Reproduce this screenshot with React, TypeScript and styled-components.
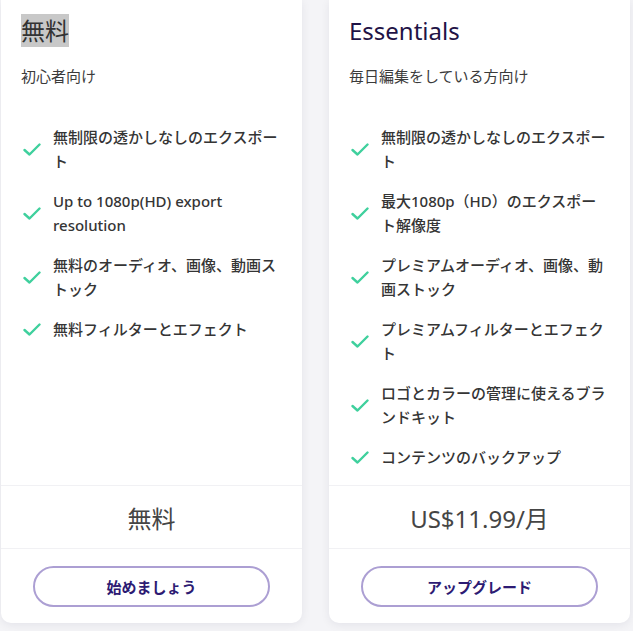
import React from "react";
import styled, { createGlobalStyle } from "styled-components";

const Global = createGlobalStyle`
  html, body { margin: 0; padding: 0; background: #f4f4f7; }
  body { font-family: "Noto Sans", "Noto Sans CJK JP", sans-serif; color: #3b3b3b; }
  * { box-sizing: border-box; }
`;

const Grid = styled.div`
  display: grid;
  grid-template-columns: 301px 301px;
  column-gap: 27px;
  padding-left: 1px;
  width: 633px;
  height: 631px;
  align-items: stretch;
  padding-bottom: 8px;
`;

const Card = styled.div`
  display: flex;
  flex-direction: column;
  background: #ffffff;
  border-radius: 0 0 10px 10px;
  box-shadow: 0 2px 10px rgba(20, 20, 60, 0.07);
`;

const Header = styled.div`
  padding: 13px 20px 0;
`;

const Title = styled.h2<{ $brand?: boolean }>`
  margin: 0;
  font-size: 24px;
  line-height: 35px;
  font-weight: 400;
  color: ${(p) => (p.$brand ? "#1f1346" : "#333333")};
`;

const Selected = styled.span`
  background: #c8c8c8;
`;

const Subtitle = styled.p`
  margin: 18px 0 0;
  font-size: 15px;
  line-height: 20px;
  color: #3b3b3b;
`;

const Features = styled.ul`
  list-style: none;
  margin: 39px 0 0;
  padding: 0 20px 16px;
  flex: 1;
  display: flex;
  flex-direction: column;
  gap: 16px;
`;

const Item = styled.li`
  display: flex;
  align-items: center;
  gap: 12px;
`;

const Check = styled.svg`
  flex: none;
  width: 18px;
  height: 13px;
  margin-left: 2px;
`;

const ItemText = styled.span`
  font-size: 15px;
  line-height: 24px;
  font-weight: 500;
  color: #353535;
`;

const Price = styled.div`
  height: 64px;
  border-top: 1px solid #f1f1f4;
  border-bottom: 1px solid #f1f1f4;
  display: flex;
  align-items: center;
  justify-content: center;
  font-size: 24px;
  color: #454545;
`;

const Actions = styled.div`
  padding: 17px 32px 16px;
`;

const Button = styled.button`
  display: block;
  width: 100%;
  height: 41px;
  border: 2px solid #ac9fd3;
  border-radius: 21px;
  background: #ffffff;
  font-family: inherit;
  font-size: 15px;
  font-weight: 700;
  color: #2d1b73;
  cursor: pointer;
`;

const CheckIcon = () => (
  <Check viewBox="0 0 18 13" aria-hidden="true">
    <polyline
      points="1.5,7 6.5,11.5 16.5,1.5"
      fill="none"
      stroke="#3fd09d"
      strokeWidth="2.4"
      strokeLinecap="round"
      strokeLinejoin="round"
    />
  </Check>
);

type Plan = {
  title: React.ReactNode;
  brand?: boolean;
  subtitle: string;
  features: string[];
  price: string;
  cta: string;
};

const plans: Plan[] = [
  {
    title: <Selected>無料</Selected>,
    subtitle: "初心者向け",
    features: [
      "無制限の透かしなしのエクスポート",
      "Up to 1080p(HD) export resolution",
      "無料のオーディオ、画像、動画ストック",
      "無料フィルターとエフェクト",
    ],
    price: "無料",
    cta: "始めましょう",
  },
  {
    title: "Essentials",
    brand: true,
    subtitle: "毎日編集をしている方向け",
    features: [
      "無制限の透かしなしのエクスポート",
      "最大1080p（HD）のエクスポート解像度",
      "プレミアムオーディオ、画像、動画ストック",
      "プレミアムフィルターとエフェクト",
      "ロゴとカラーの管理に使えるブランドキット",
      "コンテンツのバックアップ",
    ],
    price: "US$11.99/月",
    cta: "アップグレード",
  },
];

export default function App() {
  return (
    <>
      <Global />
      <Grid>
        {plans.map((p, i) => (
          <Card key={i}>
            <Header>
              <Title $brand={p.brand}>{p.title}</Title>
              <Subtitle>{p.subtitle}</Subtitle>
            </Header>
            <Features>
              {p.features.map((f) => (
                <Item key={f}>
                  <CheckIcon />
                  <ItemText>{f}</ItemText>
                </Item>
              ))}
            </Features>
            <Price>{p.price}</Price>
            <Actions>
              <Button>{p.cta}</Button>
            </Actions>
          </Card>
        ))}
      </Grid>
    </>
  );
}
